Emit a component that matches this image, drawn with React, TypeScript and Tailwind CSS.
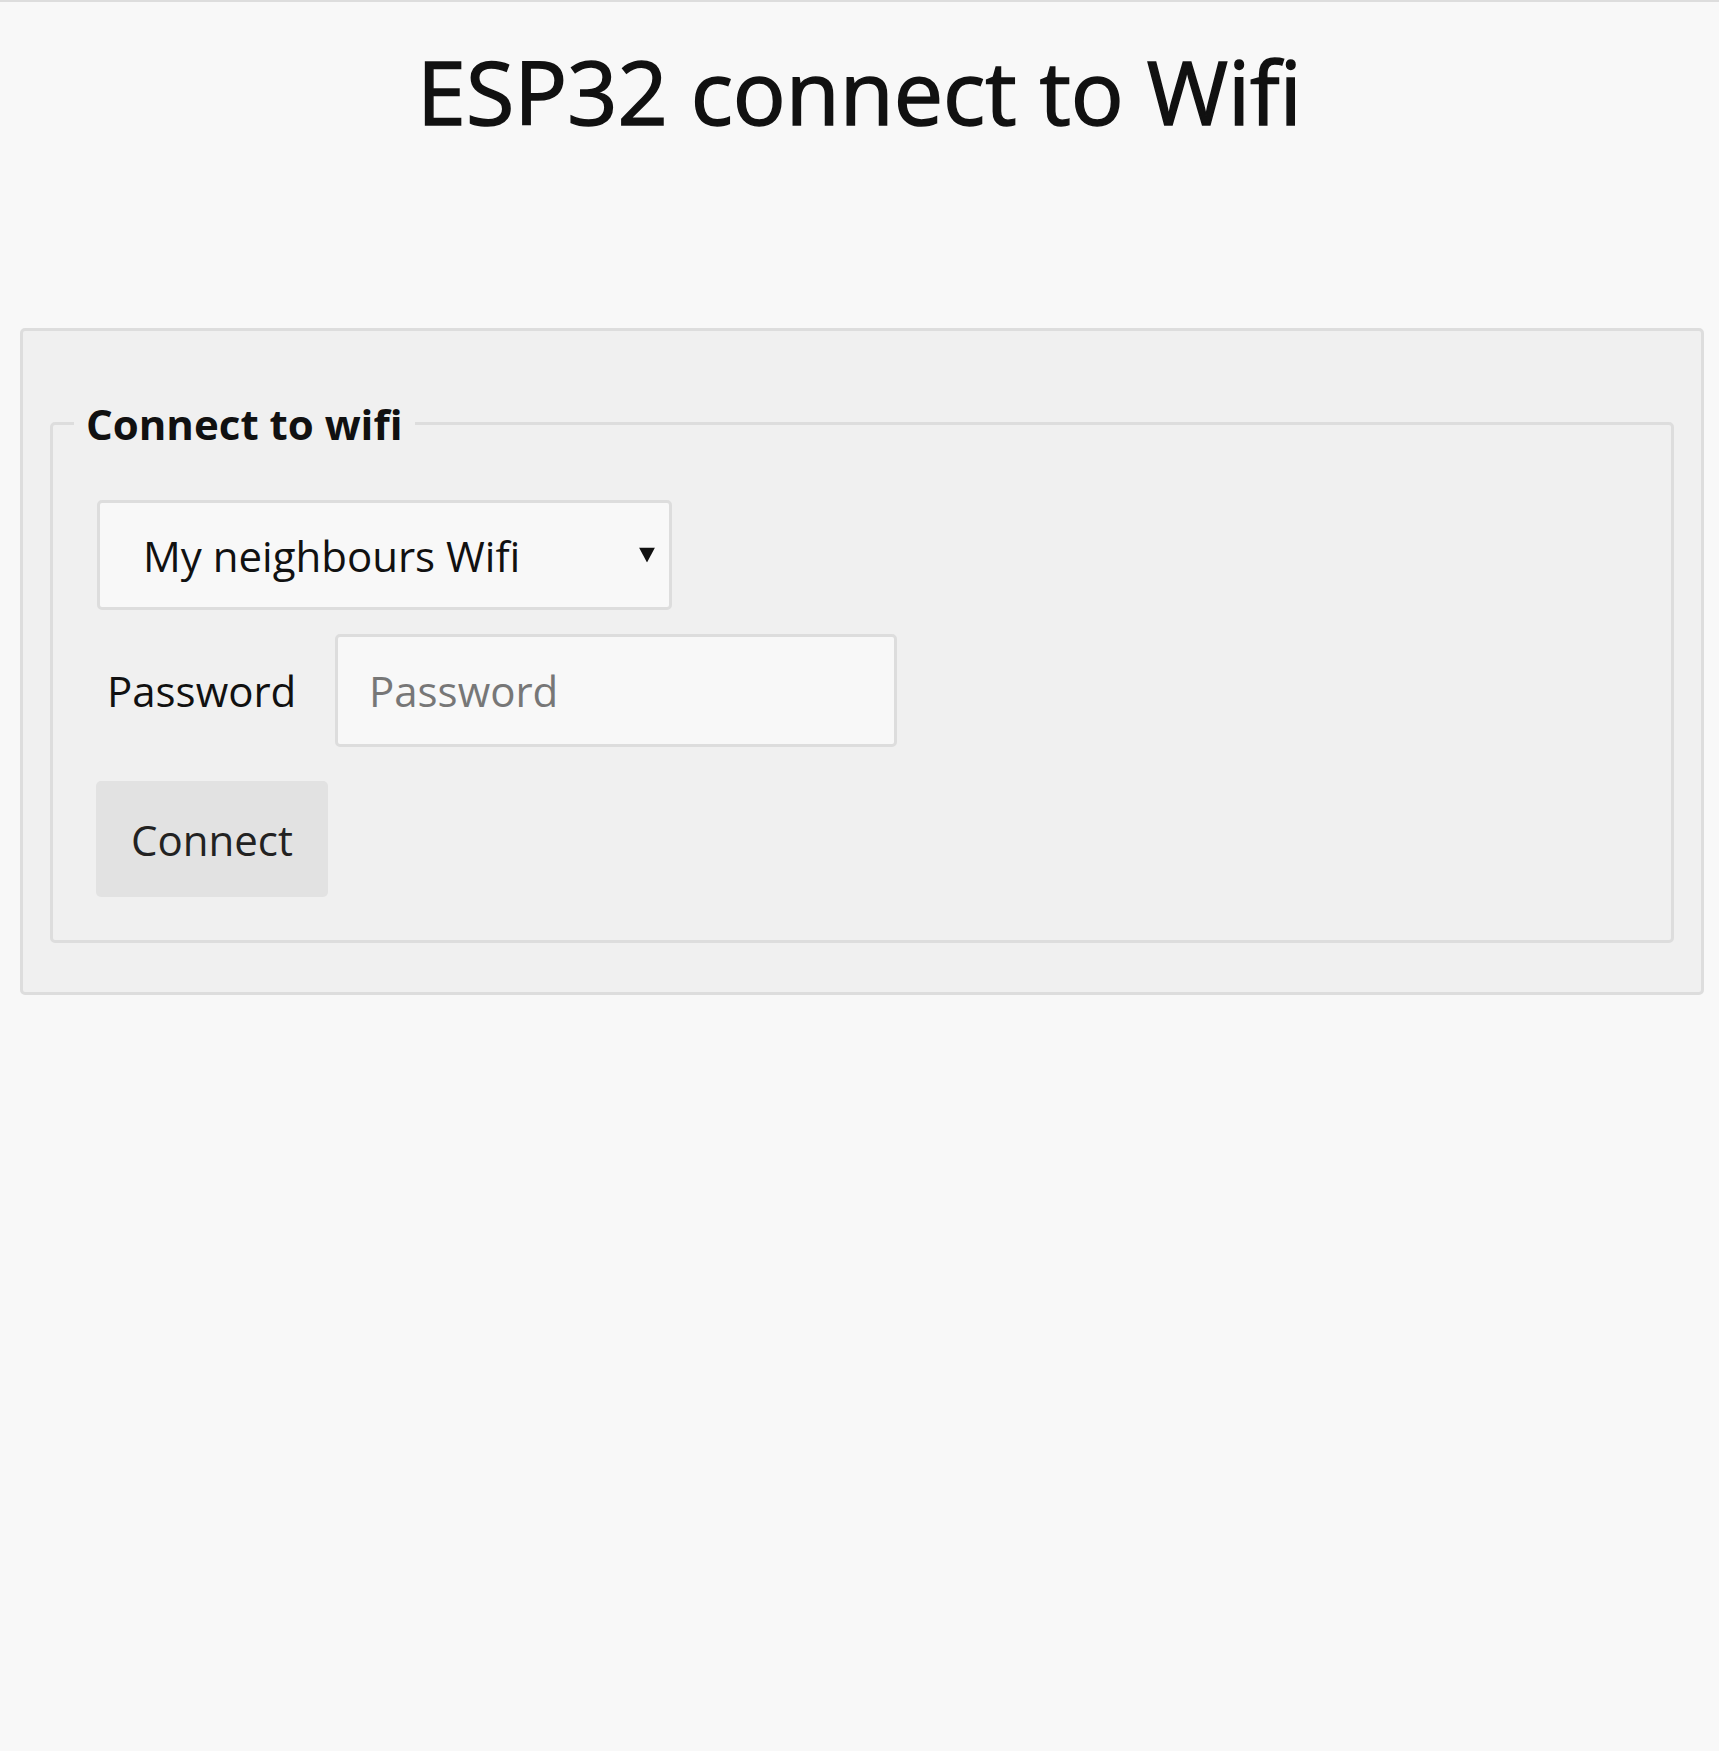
import React from 'react';

const networks = ['My neighbours Wifi', 'Home Network', 'Office'];

const App = () => {
  return (
    <div className="min-h-[1751px] border-t-2 border-[#dddddd] bg-[#f8f8f8] font-['Open_Sans',sans-serif] text-[#111111]">
      <h1 className="pt-[29px] text-center text-[88px] font-normal leading-[120px] [-webkit-text-stroke:1.5px_#111111]">
        ESP32 connect to Wifi
      </h1>

      <div className="ml-[20px] mr-[15px] mt-[177px] rounded-[5px] border-[3px] border-[#dddddd] bg-[#f0f0f0] px-[27px] pb-[49px] pt-[64px]">
        <fieldset className="rounded-[5px] border-[3px] border-[#dddddd] px-[21px] pb-[43px]">
          <legend className="px-3 text-[42px] font-bold leading-[57px]">Connect to wifi</legend>

          <div className="flex flex-col items-start pl-[23px]">
            {/* network picker */}
            <div className="relative mt-[48px]">
              <select
                defaultValue={networks[0]}
                className="h-[110px] w-[575px] appearance-none rounded-[5px] border-[3px] border-[#dddddd] bg-[#f8f8f8] pl-[43px] pr-[50px] text-[42px] text-[#111111] outline-none"
              >
                {networks.map((n) => (
                  <option key={n} value={n}>
                    {n}
                  </option>
                ))}
              </select>
              <svg
                className="pointer-events-none absolute right-[17px] top-1/2 -translate-y-1/2"
                width="16"
                height="15"
                viewBox="0 0 16 15"
              >
                <path d="M0 0 H16 L8 15 Z" fill="#111111" />
              </svg>
            </div>

            <div className="mt-[24px] flex items-center">
              <label htmlFor="pw" className="w-[238px] pl-[10px] text-[42px]">
                Password
              </label>
              <input
                id="pw"
                type="password"
                placeholder="Password"
                className="h-[113px] w-[562px] rounded-[5px] border-[3px] border-[#dddddd] bg-[#f8f8f8] pl-[31px] text-[42px] outline-none placeholder:text-[#777777]"
              />
            </div>

            <button className="-ml-px mt-[34px] h-[116px] w-[232px] rounded-[5px] bg-[#e2e2e2] text-[42px] text-[#222222]">
              Connect
            </button>
          </div>
        </fieldset>
      </div>
    </div>
  );
};

export default App;
